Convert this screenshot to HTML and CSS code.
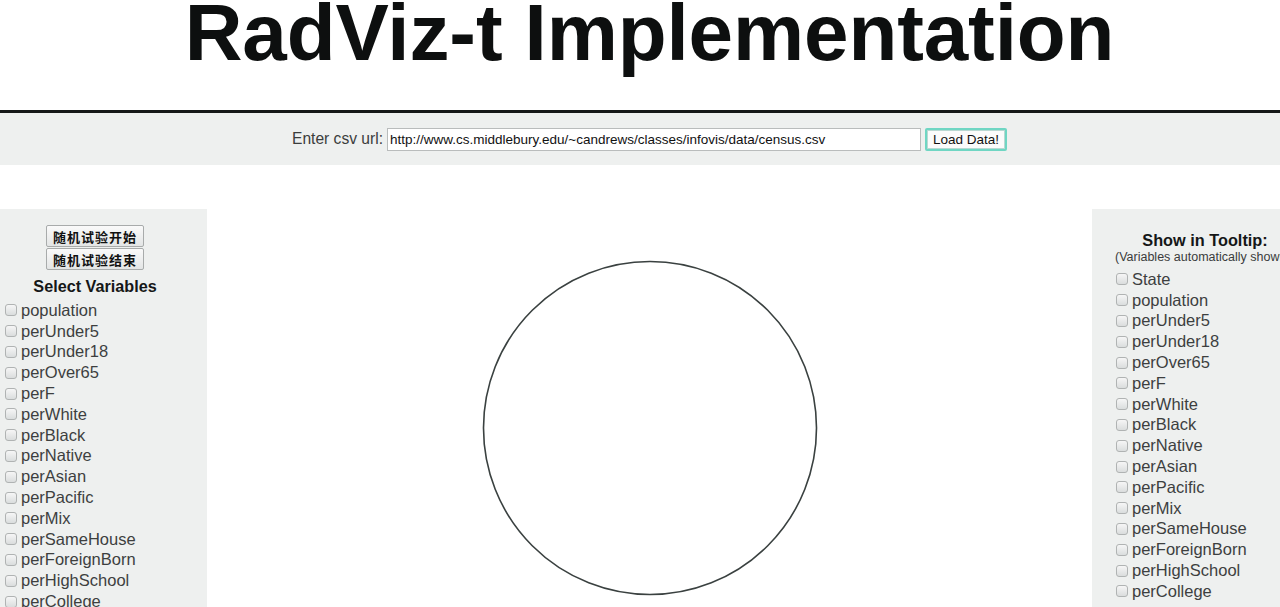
FILE: index.html
```html
<!DOCTYPE html>
<html lang="en">
<head>
<meta charset="utf-8">
<title>RadViz-t Implementation</title>
<link rel="stylesheet" href="styles.css">
</head>
<body>
<div class="page">
<header class="page-header">
  <h1 class="title">RadViz-t Implementation</h1>
</header>
<div class="csv-bar">
  <label class="csv-label" for="csv">Enter csv url:</label>
  <input class="csv-input" id="csv" type="text" value="http://www.cs.middlebury.edu/~candrews/classes/infovis/data/census.csv">
  <button class="load-btn" type="button">Load Data!</button>
</div>
<div class="main">
  <aside class="panel panel-left">
    <div class="panel-top">
      <button class="exp-btn" type="button">随机试验开始</button>
      <button class="exp-btn" type="button">随机试验结束</button>
      <div class="panel-heading">Select Variables</div>
    </div>
    <ul class="var-list">
      <li><span class="cb"></span>population</li>
      <li><span class="cb"></span>perUnder5</li>
      <li><span class="cb"></span>perUnder18</li>
      <li><span class="cb"></span>perOver65</li>
      <li><span class="cb"></span>perF</li>
      <li><span class="cb"></span>perWhite</li>
      <li><span class="cb"></span>perBlack</li>
      <li><span class="cb"></span>perNative</li>
      <li><span class="cb"></span>perAsian</li>
      <li><span class="cb"></span>perPacific</li>
      <li><span class="cb"></span>perMix</li>
      <li><span class="cb"></span>perSameHouse</li>
      <li><span class="cb"></span>perForeignBorn</li>
      <li><span class="cb"></span>perHighSchool</li>
      <li><span class="cb"></span>perCollege</li>
    </ul>
  </aside>
  <section class="canvas">
    <svg class="radviz" width="338" height="338" viewBox="0 0 338 338">
      <circle cx="169" cy="169" r="166.5" fill="none" stroke="#3a4140" stroke-width="1.6"/>
    </svg>
  </section>
  <aside class="panel panel-right">
    <div class="panel-heading tooltip-heading">Show in Tooltip:</div>
    <div class="tooltip-sub">(Variables automatically shown)</div>
    <ul class="var-list var-list-right">
      <li><span class="cb"></span>State</li>
      <li><span class="cb"></span>population</li>
      <li><span class="cb"></span>perUnder5</li>
      <li><span class="cb"></span>perUnder18</li>
      <li><span class="cb"></span>perOver65</li>
      <li><span class="cb"></span>perF</li>
      <li><span class="cb"></span>perWhite</li>
      <li><span class="cb"></span>perBlack</li>
      <li><span class="cb"></span>perNative</li>
      <li><span class="cb"></span>perAsian</li>
      <li><span class="cb"></span>perPacific</li>
      <li><span class="cb"></span>perMix</li>
      <li><span class="cb"></span>perSameHouse</li>
      <li><span class="cb"></span>perForeignBorn</li>
      <li><span class="cb"></span>perHighSchool</li>
      <li><span class="cb"></span>perCollege</li>
    </ul>
  </aside>
</div>
</div>
</body>
</html>
```

FILE: styles.css
```css
html, body {
  margin: 0;
  padding: 0;
  overflow: hidden;
  background: #ffffff;
  font-family: "Liberation Sans", Arial, "Noto Sans CJK SC", sans-serif;
  color: #333;
}

.page {
  width: 1299px;
}

.page-header {
  height: 110px;
  border-bottom: 3px solid #161818;
  text-align: center;
}

.title {
  margin: 0;
  font-size: 80px;
  line-height: 66px;
  font-weight: 700;
  color: #0d0f0f;
  letter-spacing: -0.1px;
}

.csv-bar {
  height: 52px;
  background: #eef0ef;
  display: flex;
  align-items: center;
  justify-content: center;
  box-sizing: border-box;
}

.csv-label {
  font-size: 15.6px;
  color: #3b3d3d;
  margin-right: 4px;
}

.csv-input {
  width: 534px;
  height: 23px;
  box-sizing: border-box;
  border: 1px solid #b9bcbc;
  background: #fff;
  font-family: "Liberation Sans", Arial, sans-serif;
  font-size: 13.5px;
  color: #111;
  padding: 0 2px;
  margin: 0;
}

.load-btn {
  margin-left: 4px;
  width: 82px;
  height: 23px;
  box-sizing: border-box;
  border: 2px solid #6fd6c3;
  box-shadow: inset 0 0 0 1px #b9d8d2;
  background: #fbfbfb;
  font-family: "Liberation Sans", Arial, sans-serif;
  font-size: 13.5px;
  color: #111;
  padding: 0;
  border-radius: 2px;
}

.main {
  width: 1318px;
  margin-top: 44px;
  display: flex;
  align-items: flex-start;
}

.panel {
  background: #eef0ef;
  flex-shrink: 0;
  height: 420px;
}

.panel-left {
  width: 207px;
  box-sizing: border-box;
  padding-top: 16px;
}

.panel-top {
  width: 190px;
  display: flex;
  flex-direction: column;
  align-items: center;
}

.exp-btn {
  width: 98px;
  height: 22px;
  margin: 0 0 1px 0;
  padding: 0;
  box-sizing: border-box;
  border: 1px solid #a8abab;
  border-radius: 2px;
  background: linear-gradient(#fafafa, #e3e5e5);
  font-family: "Noto Sans CJK SC", sans-serif;
  font-size: 13px;
  font-weight: 700;
  color: #111;
  letter-spacing: 1px;
}

.panel-heading {
  font-size: 16.2px;
  font-weight: 700;
  color: #151717;
  line-height: 20px;
  margin-top: 5px;
}

.var-list {
  list-style: none;
  margin: 4px 0 0 0;
  padding: 0 0 0 5px;
}

.var-list li {
  display: flex;
  align-items: center;
  height: 20.8px;
  font-size: 16.5px;
  color: #3d3f3f;
  white-space: nowrap;
}

.cb {
  width: 10px;
  height: 10px;
  border: 1px solid #b0b3b3;
  border-radius: 3px;
  background: linear-gradient(#f6f6f6, #dadddd);
  margin-right: 4px;
  flex-shrink: 0;
}

.canvas {
  width: 885px;
  flex-shrink: 0;
  display: flex;
  justify-content: center;
  padding-top: 50px;
}

.radviz {
  display: block;
}

.panel-right {
  width: 226px;
  box-sizing: border-box;
  padding: 21px 0 0 22px;
  height: 420px;
}

.tooltip-heading {
  width: 182px;
  text-align: center;
  margin-top: 0;
  font-size: 16.3px;
}

.tooltip-sub {
  font-size: 12.5px;
  color: #3a3c3c;
  white-space: nowrap;
  line-height: 14px;
  margin-left: 1px;
}

.var-list-right {
  margin-top: 5px;
  padding-left: 2px;
}
```
